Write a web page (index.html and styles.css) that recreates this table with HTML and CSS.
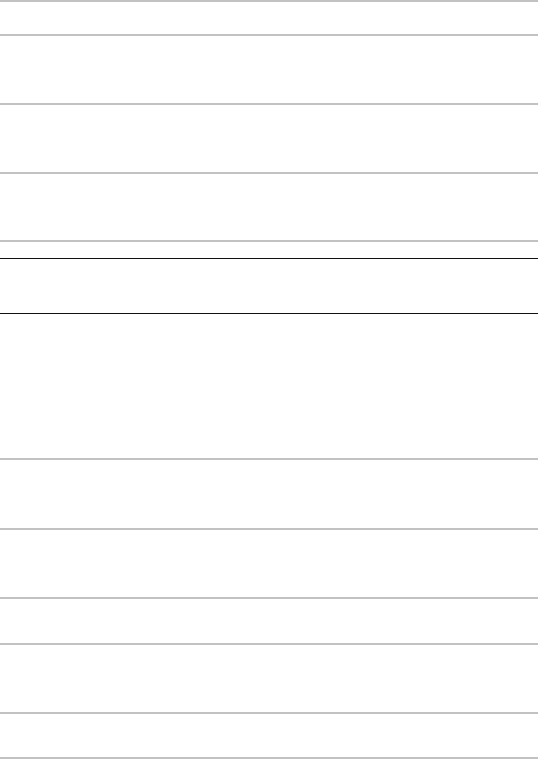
FILE: index.html
```html
<!DOCTYPE html>
<html>
<head>
<meta charset="utf-8">
<link rel="stylesheet" href="styles.css">
</head>
<body>
<div class="page">
  <div class="row gray h-34"></div>
  <div class="row gray h-69"></div>
  <div class="row gray h-69"></div>
  <div class="row gray h-68"></div>
  <div class="row gray h-18"></div>
  <div class="row dark h-55"></div>
  <div class="row dark h-145"></div>
  <div class="row gray h-70"></div>
  <div class="row gray h-69"></div>
  <div class="row gray h-46"></div>
  <div class="row gray h-69"></div>
  <div class="row gray h-45"></div>
  <div class="row gray h-end"></div>
</div>
</body>
</html>
```
FILE: styles.css
```css
html, body {
  margin: 0;
  padding: 0;
  background: #ffffff;
  font-family: "Liberation Sans", Arial, sans-serif;
}
.page {
  width: 538px;
  display: flex;
  flex-direction: column;
}
.row {
  box-sizing: border-box;
  flex: none;
}
.gray { border-top: 2px solid #c2c2c2; }
.dark { border-top: 1px solid #111111; }
.h-34 { height: 34px; }
.h-69 { height: 69px; }
.h-68 { height: 68px; }
.h-18 { height: 18px; }
.h-55 { height: 55px; }
.h-145 { height: 145px; }
.h-70 { height: 70px; }
.h-46 { height: 46px; }
.h-45 { height: 45px; }
.h-end { height: 2px; }
```
